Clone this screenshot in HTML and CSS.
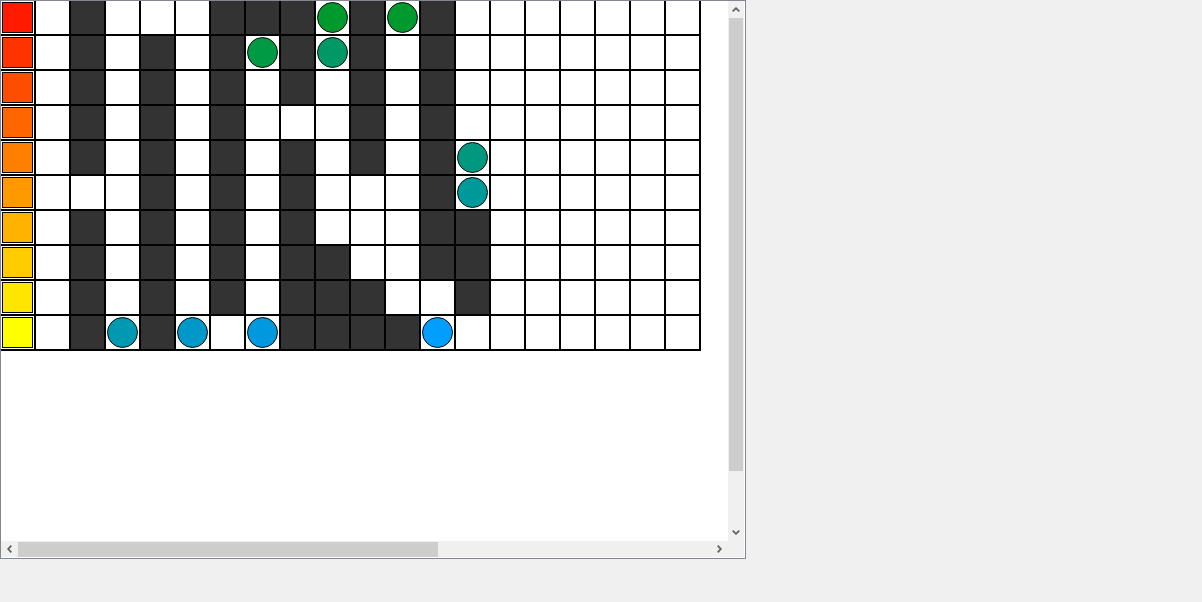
FILE: index.html
```html
<!DOCTYPE html>
<html>
<head>
<meta charset="utf-8">
<link rel="stylesheet" href="styles.css">
</head>
<body>
<div class="frame">
  <div class="main">
    <div class="view">
      <div class="grid">
        <div class="c"><div class="sw s0"></div></div><div class="c"></div><div class="c d"></div><div class="c"></div><div class="c"></div><div class="c"></div><div class="c d"></div><div class="c d"></div><div class="c d"></div><div class="c"><div class="ball b0"></div></div><div class="c d"></div><div class="c"><div class="ball b0"></div></div><div class="c d"></div><div class="c"></div><div class="c"></div><div class="c"></div><div class="c"></div><div class="c"></div><div class="c"></div><div class="c"></div>
        <div class="c"><div class="sw s1"></div></div><div class="c"></div><div class="c d"></div><div class="c"></div><div class="c d"></div><div class="c"></div><div class="c d"></div><div class="c"><div class="ball b1"></div></div><div class="c d"></div><div class="c"><div class="ball b2"></div></div><div class="c d"></div><div class="c"></div><div class="c d"></div><div class="c"></div><div class="c"></div><div class="c"></div><div class="c"></div><div class="c"></div><div class="c"></div><div class="c"></div>
        <div class="c"><div class="sw s2"></div></div><div class="c"></div><div class="c d"></div><div class="c"></div><div class="c d"></div><div class="c"></div><div class="c d"></div><div class="c"></div><div class="c d"></div><div class="c"></div><div class="c d"></div><div class="c"></div><div class="c d"></div><div class="c"></div><div class="c"></div><div class="c"></div><div class="c"></div><div class="c"></div><div class="c"></div><div class="c"></div>
        <div class="c"><div class="sw s3"></div></div><div class="c"></div><div class="c d"></div><div class="c"></div><div class="c d"></div><div class="c"></div><div class="c d"></div><div class="c"></div><div class="c"></div><div class="c"></div><div class="c d"></div><div class="c"></div><div class="c d"></div><div class="c"></div><div class="c"></div><div class="c"></div><div class="c"></div><div class="c"></div><div class="c"></div><div class="c"></div>
        <div class="c"><div class="sw s4"></div></div><div class="c"></div><div class="c d"></div><div class="c"></div><div class="c d"></div><div class="c"></div><div class="c d"></div><div class="c"></div><div class="c d"></div><div class="c"></div><div class="c d"></div><div class="c"></div><div class="c d"></div><div class="c"><div class="ball b3"></div></div><div class="c"></div><div class="c"></div><div class="c"></div><div class="c"></div><div class="c"></div><div class="c"></div>
        <div class="c"><div class="sw s5"></div></div><div class="c"></div><div class="c"></div><div class="c"></div><div class="c d"></div><div class="c"></div><div class="c d"></div><div class="c"></div><div class="c d"></div><div class="c"></div><div class="c"></div><div class="c"></div><div class="c d"></div><div class="c"><div class="ball b4"></div></div><div class="c"></div><div class="c"></div><div class="c"></div><div class="c"></div><div class="c"></div><div class="c"></div>
        <div class="c"><div class="sw s6"></div></div><div class="c"></div><div class="c d"></div><div class="c"></div><div class="c d"></div><div class="c"></div><div class="c d"></div><div class="c"></div><div class="c d"></div><div class="c"></div><div class="c"></div><div class="c"></div><div class="c d"></div><div class="c d"></div><div class="c"></div><div class="c"></div><div class="c"></div><div class="c"></div><div class="c"></div><div class="c"></div>
        <div class="c"><div class="sw s7"></div></div><div class="c"></div><div class="c d"></div><div class="c"></div><div class="c d"></div><div class="c"></div><div class="c d"></div><div class="c"></div><div class="c d"></div><div class="c d"></div><div class="c"></div><div class="c"></div><div class="c d"></div><div class="c d"></div><div class="c"></div><div class="c"></div><div class="c"></div><div class="c"></div><div class="c"></div><div class="c"></div>
        <div class="c"><div class="sw s8"></div></div><div class="c"></div><div class="c d"></div><div class="c"></div><div class="c d"></div><div class="c"></div><div class="c d"></div><div class="c"></div><div class="c d"></div><div class="c d"></div><div class="c d"></div><div class="c"></div><div class="c"></div><div class="c d"></div><div class="c"></div><div class="c"></div><div class="c"></div><div class="c"></div><div class="c"></div><div class="c"></div>
        <div class="c"><div class="sw s9"></div></div><div class="c"></div><div class="c d"></div><div class="c"><div class="ball b5"></div></div><div class="c d"></div><div class="c"><div class="ball b6"></div></div><div class="c"></div><div class="c"><div class="ball b7"></div></div><div class="c d"></div><div class="c d"></div><div class="c d"></div><div class="c d"></div><div class="c"><div class="ball b8"></div></div><div class="c"></div><div class="c"></div><div class="c"></div><div class="c"></div><div class="c"></div><div class="c"></div><div class="c"></div>
      </div>
    </div>
    <div class="vbar">
      <div class="btn"><svg width="8" height="5" viewBox="0 0 8 5"><polyline points="0.7,4.3 4,1.2 7.3,4.3" fill="none" stroke="#606060" stroke-width="1.8"/></svg></div>
      <div class="vtrack"><div class="vthumb"></div></div>
      <div class="btn"><svg width="8" height="5" viewBox="0 0 8 5"><polyline points="0.7,0.7 4,3.8 7.3,0.7" fill="none" stroke="#606060" stroke-width="1.8"/></svg></div>
    </div>
  </div>
  <div class="bottom">
    <div class="hbar">
      <div class="hbtn"><svg width="5" height="8" viewBox="0 0 5 8"><polyline points="4.3,0.7 1.2,4 4.3,7.3" fill="none" stroke="#606060" stroke-width="1.8"/></svg></div>
      <div class="htrack"><div class="hthumb"></div></div>
      <div class="hbtn"><svg width="5" height="8" viewBox="0 0 5 8"><polyline points="0.7,0.7 3.8,4 0.7,7.3" fill="none" stroke="#606060" stroke-width="1.8"/></svg></div>
    </div>
    <div class="corner"></div>
  </div>
</div>
</body>
</html>
```
FILE: styles.css
```css
html, body {
  margin: 0;
  padding: 0;
  background: #f0f0f0;
  font-family: "Liberation Sans", Arial, sans-serif;
}
.frame {
  width: 744px;
  height: 557px;
  border: 1px solid #828790;
  background: #fff;
  display: flex;
  flex-direction: column;
}
.main {
  display: flex;
  height: 540px;
}
.view {
  width: 727px;
  height: 540px;
  background: #fff;
  overflow: hidden;
}
.grid {
  display: grid;
  grid-template-columns: repeat(20, 35px);
  grid-template-rows: repeat(10, 35px);
  width: 700px;
}
.c {
  box-sizing: border-box;
  border-right: 2px solid #000;
  border-bottom: 2px solid #000;
  background: #fff;
  padding: 1px;
}
.c.d { background: #333; }
.sw {
  box-sizing: border-box;
  width: 31px;
  height: 31px;
  border: 1px solid #000;
}
.s0 { background: rgb(255, 26, 0); }
.s1 { background: rgb(255, 51, 0); }
.s2 { background: rgb(255, 77, 0); }
.s3 { background: rgb(255, 102, 0); }
.s4 { background: rgb(255, 128, 0); }
.s5 { background: rgb(255, 153, 0); }
.s6 { background: rgb(255, 179, 0); }
.s7 { background: rgb(255, 204, 0); }
.s8 { background: rgb(255, 230, 0); }
.s9 { background: rgb(255, 255, 0); }
.ball {
  box-sizing: border-box;
  width: 31px;
  height: 31px;
  border-radius: 50%;
  border: 1px solid #0a0a0a;
}
.b0 { background: #00992e; }
.b1 { background: #009944; }
.b2 { background: #009966; }
.b3 { background: #009980; }
.b4 { background: #00999a; }
.b5 { background: #0099b2; }
.b6 { background: #0097c9; }
.b7 { background: #0099e0; }
.b8 { background: #009eff; }
.vbar {
  box-sizing: border-box;
  width: 17px;
  height: 540px;
  background: #f0f0f0;
  border-right: 1px solid #fff;
  display: flex;
  flex-direction: column;
}
.btn {
  height: 17px;
  display: flex;
  align-items: center;
  justify-content: center;
  flex: none;
}
.vtrack {
  flex: 1;
  padding: 0 1px;
}
.vthumb {
  height: 453px;
  background: #cdcdcd;
}
.bottom {
  display: flex;
  height: 17px;
}
.hbar {
  box-sizing: border-box;
  width: 727px;
  height: 17px;
  background: #f0f0f0;
  border-bottom: 1px solid #fff;
  display: flex;
}
.hbtn {
  width: 17px;
  display: flex;
  align-items: center;
  justify-content: center;
  flex: none;
}
.htrack {
  flex: 1;
  padding: 1px 0 0 0;
}
.hthumb {
  width: 420px;
  height: 15px;
  background: #cdcdcd;
}
.corner {
  box-sizing: border-box;
  width: 17px;
  height: 17px;
  background: #f0f0f0;
  border-right: 1px solid #fff;
  border-bottom: 1px solid #fff;
}
```
